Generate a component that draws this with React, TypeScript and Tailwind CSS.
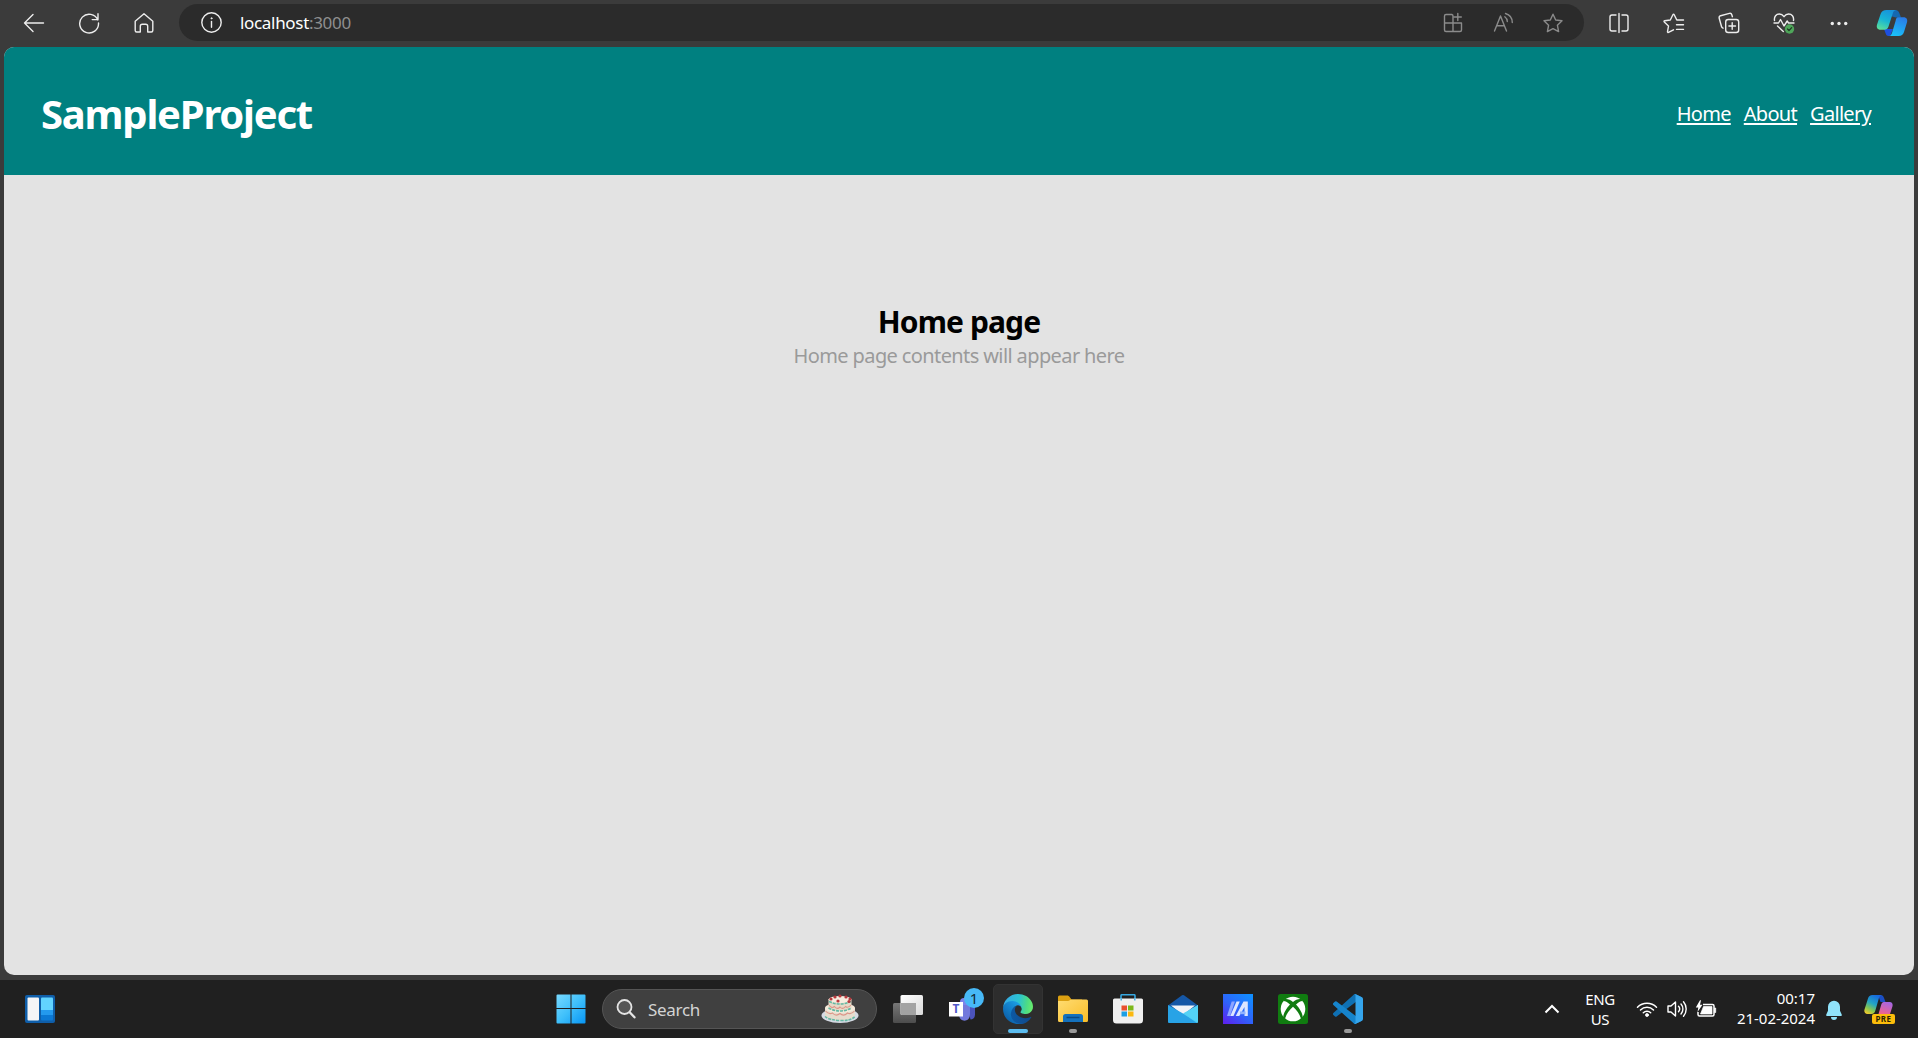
import type { ReactNode } from "react";

type IconProps = { w: number; h?: number; children: ReactNode; className?: string };

function Icon({ w, h = w, children, className = "" }: IconProps) {
  return (
    <svg
      width={w}
      height={h}
      viewBox={`0 0 ${w} ${h}`}
      fill="none"
      stroke="currentColor"
      strokeWidth="1.4"
      strokeLinecap="round"
      strokeLinejoin="round"
      className={`block shrink-0 ${className}`}
    >
      {children}
    </svg>
  );
}

const starPath = "M11 2.2 L13.7 8 L20 8.8 L15.4 13.2 L16.6 19.6 L11 16.6 L5.4 19.6 L6.6 13.2 L2 8.8 L8.3 8 Z";

function CopilotMark() {
  return (
    <svg width="32" height="28" viewBox="0 0 32 28" className="block shrink-0">
      <defs>
        <linearGradient id="cpA" x1="0.6" y1="0" x2="0.2" y2="1">
          <stop offset="0" stopColor="#1794dc" />
          <stop offset="0.5" stopColor="#18b5d4" />
          <stop offset="1" stopColor="#5be09a" />
        </linearGradient>
        <linearGradient id="cpB" x1="0.7" y1="0" x2="0.3" y2="1">
          <stop offset="0" stopColor="#2a7ce8" />
          <stop offset="1" stopColor="#19c3fa" />
        </linearGradient>
      </defs>
      <path d="M17 1h2.500c2 0 3.300 1.300 4 3.500l1.500 4h-5L14 7z" fill="#1568b0" />
      <path d="M8 20h9l-2 5c-.5 1.400-1.300 2-2.500 2-1.600 0-2.500-1-3-3z" fill="#1d4fe0" />
      <path d="M10.500 1H20c-2 .3-2.800 1.800-3.500 4.200l-4 12.300c-.8 2.300-2 3.300-4.200 3.300H4.500c-3 0-4.300-2.200-3.500-5L4.600 5C5.500 2.400 7.500 1 10.500 1z" fill="url(#cpA)" />
      <path d="M22 8.300h5.500c3 0 4.300 2.200 3.500 5l-3 9.700c-.8 2.700-2.600 4.100-5.400 4.100h-9.900c2-.2 2.800-1.600 3.500-3.800l3.300-11c.6-2.600 1-4 2.500-4z" fill="url(#cpB)" />
    </svg>
  );
}

function BrowserBar() {
  return (
    <div className="flex h-[47px] items-start bg-[#3b3b3b] text-[#ededed]">
      <div className="flex h-[45px] w-[179px] items-center pl-[6px]">
        <div className="flex w-[55px] justify-center">
          <Icon w={22}>
            <path d="M20.500 11H1.500M10 2.500 1.500 11l8.500 8.500" />
          </Icon>
        </div>
        <div className="flex w-[55px] justify-center">
          <Icon w={22}>
            <path d="M19.800 8A9.400 9.400 0 1 0 20.500 11M20 1.800V7.600H14.200" />
          </Icon>
        </div>
        <div className="flex w-[55px] justify-center">
          <Icon w={22}>
            <path d="M2.200 9.200 11 1.700l8.800 7.500v9.300a1.500 1.500 0 0 1-1.500 1.500h-3.600v-5.800a2 2 0 0 0-2-2h-3.400a2 2 0 0 0-2 2v5.800H3.700a1.500 1.500 0 0 1-1.500-1.500z" />
          </Icon>
        </div>
      </div>

      <div className="mt-1 flex h-[37px] w-[1405px] items-center rounded-full bg-[#2b2b2b] pl-[21px] pr-5">
        <Icon w={23}>
          <circle cx="11.500" cy="11.500" r="9.700" />
          <path d="M11.500 10.500v5.700" />
          <circle cx="11.500" cy="7.300" r=".6" fill="currentColor" strokeWidth="0.8" />
        </Icon>
        <div className="ml-[17px] flex-1 whitespace-nowrap text-[17px] leading-[22px] tracking-[-0.32px] text-white">
          <span>localhost</span>
          <span className="text-[#8f8f8f]">:3000</span>
        </div>
        <div className="flex items-center text-[#8b8b8b]">
          <Icon w={22}>
            <path d="M10 2.500H4A1.500 1.500 0 0 0 2.500 4v14A1.500 1.500 0 0 0 4 19.500h14a1.500 1.500 0 0 0 1.500-1.500v-7H2.500M11 19.500V4a1.500 1.500 0 0 0-1.500-1.500M15.800 1.500v7M12.300 5h7" />
          </Icon>
          <Icon w={22} className="ml-[29px]">
            <path d="M1.500 19 7.500 4l6 15M3.700 13.800h7.600M11.800 4.800a6 6 0 0 1 2.500 4.700M12.500 1.500a9.500 9.500 0 0 1 6.800 9" />
          </Icon>
          <Icon w={22} className="ml-[27px]">
            <path d={starPath} />
          </Icon>
        </div>
      </div>

      <div className="flex h-[45px] flex-1 items-center pl-[7px]">
        <div className="flex w-[55px] justify-center">
          <Icon w={22}>
            <path d="M8 3H4a2 2 0 0 0-2 2v12a2 2 0 0 0 2 2h4M11 1.500v19M14 3h4a2 2 0 0 1 2 2v12a2 2 0 0 1-2 2h-4" />
          </Icon>
        </div>
        <div className="flex w-[55px] justify-center">
          <Icon w={24} h={22}>
            <path d="M16 8h-1.200l-2.600-5.300c-.3-.6-1-.6-1.300 0L8.300 8l-5.600.8c-.7.100-.9.800-.4 1.300l4.200 4-1 5.500c-.1.700.5 1 1 .8l5-2.600M15 8h6.500M14.500 12.700h7M14.500 17.400h7" />
          </Icon>
        </div>
        <div className="flex w-[55px] justify-center">
          <Icon w={24} h={22}>
            <rect x="8.700" y="7.500" width="13" height="13" rx="2.500" />
            <path d="M15.200 10.700v6.600M11.900 14h6.600M6 16.200c-.8-.3-1.300-1-1.500-1.700L2.200 6.300c-.3-1.300.2-2.200 1.400-2.600l8.800-2.300c1.200-.3 2 .1 2.400 1.300l.6 2" />
          </Icon>
        </div>
        <div className="flex w-[55px] justify-center">
          <Icon w={24} h={22}>
            <path d="M2.500 8.500c-.6-4 1.800-6.500 4.800-6.500 2 0 3.500 1 4.700 2.700C13.200 3 14.700 2 16.700 2c3 0 5.400 2.500 4.800 6.500M2 11h4.500l2-3.500 3.500 6.500 3.200-5 1.300 2H22M5.500 14l5.800 5.500" />
            <circle cx="17.500" cy="17" r="4.700" fill="#4fa65a" stroke="none" />
            <path d="m15.500 17 1.500 1.500 2.700-2.900" stroke="#1f3a22" strokeWidth="1.200" />
          </Icon>
        </div>
        <div className="flex w-[55px] justify-center">
          <Icon w={22}>
            <g fill="currentColor" stroke="none">
              <circle cx="4.300" cy="11.500" r="1.700" />
              <circle cx="11" cy="11.500" r="1.700" />
              <circle cx="17.700" cy="11.500" r="1.700" />
            </g>
          </Icon>
        </div>
        <div className="ml-[10px]">
          <CopilotMark />
        </div>
      </div>
    </div>
  );
}

function TaskCell({ children, running = false }: { children: ReactNode; running?: boolean }) {
  return (
    <div className="relative flex h-[58px] w-[55px] items-center justify-center">
      {children}
      {running && <span className="absolute bottom-[5px] left-[24px] h-1 w-2 rounded-full bg-[#9a9a9a]" />}
    </div>
  );
}

function Cake() {
  const cherries: [number, number][] = [[10, 5], [14, 3], [19, 2], [25, 3], [29, 5], [17, 7], [28, 7.500]];
  return (
    <svg width="38" height="30" viewBox="0 0 38 30" className="block shrink-0">
      <ellipse cx="19" cy="21.500" rx="18.500" ry="7.500" fill="#d5dae3" />
      <path d="M4 14v8c2 6 28 6 30 0v-8z" fill="#e6dccd" />
      <ellipse cx="19" cy="14" rx="15" ry="5" fill="#f3eadb" />
      <path d="M7.500 5v9c2 4 21 4 23 0V5z" fill="#e6dac8" />
      <ellipse cx="19" cy="5.500" rx="11.500" ry="3.500" fill="#f7ecdf" />
      <g fill="none" strokeWidth="1.100">
        <path d="M8 11q2.700 4 5.500 1.500 2.700 3.500 5.500.5 2.700 3 5.500-.5 2.700 2 5.500-1.500" stroke="#dc9688" />
        <path d="M4.500 17q3.500 4 7 2 3.500 4 7.500.5 3.500 3.500 7.500-.5 3.500 2 7-2" stroke="#dc9688" />
        <path d="M7.500 14q11.500 6 23 0M4 22.500q4 3.500 15 4t15-4M8 7.500q11 5 22 0" stroke="#62b9a4" strokeWidth="1.600" strokeDasharray="3 1" />
      </g>
      {cherries.map(([x, y]) => (
        <circle key={`${x}-${y}`} cx={x} cy={y} r="1.600" fill="#b8383c" />
      ))}
    </svg>
  );
}

function StartLogo() {
  return (
    <svg width="30" height="30" viewBox="0 0 30 30" className="mr-[1px]">
      <defs>
        <linearGradient id="win" x1="0" y1="0" x2="1" y2="1">
          <stop offset="0" stopColor="#78d9ff" />
          <stop offset="0.5" stopColor="#3fc0fb" />
          <stop offset="1" stopColor="#0795f4" />
        </linearGradient>
      </defs>
      <path d="M1.500.5h13v13.500H.5V1.500a1 1 0 0 1 1-1zM15.500.5h13a1 1 0 0 1 1 1V14h-14zM.5 15h14v14.500h-13a1 1 0 0 1-1-1zM15.500 15h14v13.500a1 1 0 0 1-1 1h-13z" fill="url(#win)" />
    </svg>
  );
}

function EdgeLogo() {
  return (
    <svg width="30" height="30" viewBox="0 0 256 256">
      <defs>
        <linearGradient id="e1" x1="63" y1="178" x2="241" y2="178" gradientUnits="userSpaceOnUse">
          <stop offset="0" stopColor="#0c59a4" />
          <stop offset="1" stopColor="#114a8b" />
        </linearGradient>
        <linearGradient id="e2" x1="153" y1="100" x2="46" y2="217" gradientUnits="userSpaceOnUse">
          <stop offset="0" stopColor="#1b9de2" />
          <stop offset="0.4" stopColor="#1485d0" />
          <stop offset="1" stopColor="#0d65ae" />
        </linearGradient>
        <linearGradient id="e3" x1="10" y1="60" x2="250" y2="100" gradientUnits="userSpaceOnUse">
          <stop offset="0" stopColor="#35a9e6" />
          <stop offset="0.5" stopColor="#2bc3d2" />
          <stop offset="0.800" stopColor="#4cdb86" />
          <stop offset="1" stopColor="#66eb6e" />
        </linearGradient>
      </defs>
      <path d="M235.700 195.500a93.700 93.700 0 0 1-10.600 4.700 101.900 101.900 0 0 1-35.900 6.400c-47.300 0-88.500-32.500-88.500-74.300a31.500 31.500 0 0 1 16.400-27.300c-42.800 1.800-53.800 46.400-53.800 72.500 0 73.900 68.100 81.400 82.800 81.400 7.900 0 19.800-2.300 27-4.600l1.300-.4a128.300 128.300 0 0 0 66.600-52.800 4 4 0 0 0-5.300-5.600z" fill="url(#e1)" />
      <path d="M105.700 241.400A79.200 79.200 0 0 1 83 220.100a80.700 80.700 0 0 1 29.500-120c3.200-1.500 8.500-4.100 15.600-4a32.400 32.400 0 0 1 25.700 13 31.900 31.900 0 0 1 6.300 18.700c0-.2 24.500-79.600-80-79.600-43.900 0-80 41.700-80 78.200a130.200 130.200 0 0 0 12.100 56 128 128 0 0 0 156.400 67 75.500 75.500 0 0 1-62.800-8z" fill="url(#e2)" />
      <path d="M152.300 148.900c-.9 1-3.400 2.500-3.400 5.600 0 2.600 1.700 5.200 4.800 7.300 14.300 10 41.400 8.600 41.500 8.600a59.600 59.600 0 0 0 30.300-8.300 61.400 61.400 0 0 0 30.400-52.900c.3-22.400-8-37.300-11.300-43.900C223.500 23.900 177.700 0 128 0A128 128 0 0 0 0 126.200c.5-36.500 36.800-66 80-66 3.500 0 23.500.3 42 10a72.600 72.600 0 0 1 30.900 29.300c6.100 10.600 7.200 24.100 7.200 29.500s-2.700 13.300-7.800 19.900z" fill="url(#e3)" />
    </svg>
  );
}

function Taskbar() {
  return (
    <div className="flex h-[58px] items-center bg-[#202020] text-white">
      <div className="w-[544px] pl-[25px]">
        <svg width="30" height="28" viewBox="0 0 30 28">
          <rect width="30" height="28" rx="2" fill="#0f5ea9" />
          <rect x="2.500" y="2.500" width="11.500" height="23" rx="1" fill="#f4f5f7" />
          <path d="M16 3.500a1 1 0 0 1 1-1h10a1 1 0 0 1 1 1V15H16z" fill="#62d4ff" />
          <path d="M16 15h12v5H16z" fill="#2399ee" />
          <path d="M16 20h12v4.500a1 1 0 0 1-1 1H17a1 1 0 0 1-1-1z" fill="#0b78d4" />
        </svg>
      </div>

      <TaskCell>
        <StartLogo />
      </TaskCell>
      <div className="ml-[3px] mr-[3px] flex h-10 w-[275px] items-center rounded-full border border-[#555555] bg-[#404040] pl-[12px] pr-[17px]">
        <svg width="22" height="22" viewBox="0 0 22 22" fill="none" stroke="#e4e4e4" strokeLinecap="round">
          <circle cx="9.500" cy="9" r="7" fill="#555" strokeWidth="1.800" />
          <path d="m14.700 14.300 4.800 5" strokeWidth="2.300" />
        </svg>
        <span className="ml-[11px] flex-1 pt-px text-[17px] leading-[22px] tracking-[-0.3px] text-[#d4d4d4]">Search</span>
        <Cake />
      </div>

      <TaskCell>
        <svg width="32" height="30" viewBox="0 0 32 30">
          <defs>
            <linearGradient id="tv1" x1="0" y1="0" x2="1" y2="1">
              <stop offset="0" stopColor="#ffffff" />
              <stop offset="1" stopColor="#d9d9d9" />
            </linearGradient>
            <linearGradient id="tv2" x1="0" y1="0" x2="0" y2="1">
              <stop offset="0" stopColor="#777" />
              <stop offset="1" stopColor="#4d4d4d" />
            </linearGradient>
          </defs>
          <rect x="1" y="9" width="23" height="20" rx="1.500" fill="url(#tv2)" />
          <rect x="8.500" y="1" width="22.500" height="20" rx="1.500" fill="url(#tv1)" />
          <path d="M8.500 9H24v12H10a1.500 1.500 0 0 1-1.500-1.500z" fill="#a3a3a3" />
        </svg>
      </TaskCell>

      <TaskCell>
        <svg width="32" height="32" viewBox="0 0 32 32">
          <circle cx="17" cy="9" r="4" fill="#7b83eb" />
          <path d="M20 13h8v8.500c0 3-1.700 5-4.500 5z" fill="#4b53bc" />
          <path d="M12 12h11v9c0 4-2 6.700-5.500 6.700S12 25 12 21z" fill="#7279dc" />
          <rect x="2" y="9" width="14" height="14.500" fill="#fff" />
        </svg>
        <span className="absolute left-[14px] top-[22px] w-[14px] text-center text-[12px] font-bold leading-[14px] text-[#5059c9]">T</span>
        <span className="absolute left-[29px] top-2 flex h-5 w-5 items-center justify-center rounded-full bg-[#47b9f7] text-[15px] leading-none text-[#102a38]">
          1
        </span>
      </TaskCell>

      <TaskCell>
        <div className="flex h-[50px] w-[50px] items-center justify-center rounded-[5px] border border-[#333333] bg-[#2d2d2d]">
          <EdgeLogo />
        </div>
        <span className="absolute bottom-[5px] left-[18px] h-1 w-5 rounded-full bg-[#5cbdf0]" />
      </TaskCell>

      <TaskCell running>
        <svg width="32" height="28" viewBox="0 0 32 28">
          <defs>
            <linearGradient id="fd" x1="0" y1="0" x2="1" y2="1">
              <stop offset="0" stopColor="#ffdc72" />
              <stop offset="1" stopColor="#f9bd28" />
            </linearGradient>
          </defs>
          <path d="M1 2a1.500 1.500 0 0 1 1.500-1.500H10c1.300 0 2 .6 3 2l1.500 2H25V10H1z" fill="#dca011" />
          <path d="M1 6h10c1.500 0 2-1.500 3.500-1.500h15A1.500 1.500 0 0 1 31 6v19.500a1.500 1.500 0 0 1-1.500 1.500h-27A1.500 1.500 0 0 1 1 25.500z" fill="url(#fd)" />
          <path d="M6 27v-5.500A2.500 2.500 0 0 1 8.500 19h15a2.500 2.500 0 0 1 2.500 2.500V27z" fill="#1471bd" />
          <path d="M9.500 22.500h13" stroke="#0a4a84" strokeWidth="1.500" />
        </svg>
      </TaskCell>

      <TaskCell>
        <svg width="30" height="30" viewBox="0 0 30 30">
          <path d="M8 5V1.700C8 1 8.500.7 9.200.7h11.600c.7 0 1.200.3 1.200 1V5" fill="none" stroke="#37a8e0" strokeWidth="1.600" />
          <path d="M0 6a1.500 1.500 0 0 1 1.500-1.500h27A1.500 1.500 0 0 1 30 6v20a3.500 3.500 0 0 1-3.500 3.500h-23A3.500 3.500 0 0 1 0 26z" fill="#f0f0f0" />
          <path d="M8.500 11.500H14v5H8.500z" fill="#e8502f" />
          <path d="M15 11.500h5.500v5H15z" fill="#7cb81a" />
          <path d="M8.500 17.500H14v5H8.500z" fill="#1c9fe4" />
          <path d="M15 17.500h5.500v5H15z" fill="#fbb810" />
          <path d="M8.200 4.500v2M21.800 4.500v2" stroke="#37a8e0" strokeWidth="1.400" />
        </svg>
      </TaskCell>

      <TaskCell>
        <svg width="32" height="30" viewBox="0 0 32 30">
          <path d="M1 11.500 15 1.300a1.700 1.700 0 0 1 2 0L31 11.500v6H1z" fill="#1557a6" />
          <path d="M4 11.500h24L16 21z" fill="#f1f3f7" />
          <path d="M31 11v17a1 1 0 0 1-1 1H4z" fill="#4acbf4" />
          <path d="M1 11v17a1 1 0 0 0 1 1h28L16 19.500z" fill="#28a3e6" />
          <path d="M16 19.500 31 11v17.500z" fill="#53d2f5" />
        </svg>
      </TaskCell>

      <TaskCell>
        <svg width="30" height="30" viewBox="0 0 30 30">
          <defs>
            <linearGradient id="as" x1="0.900" y1="0" x2="0.100" y2="1">
              <stop offset="0" stopColor="#108fff" />
              <stop offset="0.550" stopColor="#2f62fb" />
              <stop offset="1" stopColor="#5b23ee" />
            </linearGradient>
          </defs>
          <rect width="30" height="30" fill="url(#as)" />
          <path d="M7.500 7.500h3.200L5.800 22H2.800z" fill="#8ea6ff" transform="translate(1.200 0)" />
          <path d="M13.500 7.500h3.300L10.500 22H7.200z" fill="#dce6ff" />
          <path d="M20.500 7.500h4.300V22h-3.300v-9L16.300 22h-3.600z" fill="#dce6ff" />
          <path d="M17 17.500h5.500v2.700H17z" fill="#8fb2ff" />
        </svg>
      </TaskCell>

      <TaskCell>
        <svg width="30" height="30" viewBox="0 0 30 30">
          <rect width="30" height="30" rx="2.500" fill="#107c10" />
          <circle cx="15" cy="15" r="12.300" fill="#fff" />
          <path d="M15 8C12.500 6 9 4.500 6.500 5.300L5 7c2.300-.2 5 1.500 7 3.500C8.200 14.500 5 20 5.300 23.700l1.700 1.800C7.500 21.500 11 16 15 12.800c4 3.200 7.500 8.700 8 12.700l1.700-1.800C25 20 21.800 14.500 18 10.500c2-2 4.700-3.700 7-3.500l-1.500-1.700C21 4.500 17.500 6 15 8z" fill="#107c10" />
        </svg>
      </TaskCell>

      <TaskCell running>
        <svg width="30" height="30" viewBox="0 0 100 100">
          <path d="M96.500 10.800 75.900.9a6.200 6.200 0 0 0-7.100 1.200L1.300 63.600a4.200 4.200 0 0 0 0 6.200l5.500 5a4.200 4.200 0 0 0 5.300.2L93.400 13.400c2.700-2.100 6.600-.1 6.600 3.300v-.3a6.300 6.300 0 0 0-3.500-5.600z" fill="#0f70b3" />
          <path d="m96.500 89.200-20.600 9.900a6.200 6.200 0 0 1-7.100-1.200L1.300 36.400a4.200 4.200 0 0 1 0-6.200l5.500-5a4.200 4.200 0 0 1 5.300-.2l81.300 61.600c2.700 2.100 6.600.1 6.600-3.300v.3a6.300 6.300 0 0 1-3.500 5.600z" fill="#1684cc" />
          <path d="M75.900 99.100a6.200 6.200 0 0 1-7.100-1.200c2.300 2.300 6.200.7 6.200-2.600V4.700c0-3.300-3.900-4.900-6.200-2.600A6.200 6.200 0 0 1 75.900.9l20.600 9.900a6.300 6.300 0 0 1 3.500 5.600v67.200a6.300 6.300 0 0 1-3.500 5.600z" fill="#35a5ec" />
        </svg>
      </TaskCell>

      <div className="ml-auto flex items-center pr-[23px]">
        <svg width="16" height="10" viewBox="0 0 16 10" fill="none" stroke="#fff" strokeWidth="2">
          <path d="M1.500 8.500 8 2l6.500 6.500" />
        </svg>
        <div className="ml-[20px] w-[40px] text-center text-[15px] leading-[20px] tracking-[-0.400px]">
          <div>ENG</div>
          <div>US</div>
        </div>
        <svg width="22" height="18" viewBox="0 0 22 18" fill="none" stroke="#fff" strokeWidth="1.500" strokeLinecap="round" className="ml-[16px]">
          <path d="M1.500 7.200a13.500 13.500 0 0 1 19 0M4.500 10a9.300 9.300 0 0 1 13 0M7.300 12.700a5.300 5.300 0 0 1 7.400 0" />
          <circle cx="11" cy="15" r="1.500" fill="#fff" strokeWidth="0.800" />
        </svg>
        <svg width="22" height="18" viewBox="0 0 22 18" fill="none" stroke="#fff" strokeWidth="1.400" strokeLinecap="round" strokeLinejoin="round" className="ml-[8px]">
          <path d="M2 6h3l4.500-4v14L5 12H2zM12.500 6.300a4 4 0 0 1 0 5.400M15 4a7.500 7.500 0 0 1 0 10M17.500 1.800a11 11 0 0 1 0 14.400" />
        </svg>
        <svg width="22" height="18" viewBox="0 0 22 18" className="ml-[7px]">
          <path d="M8 4.500h9.500A1.500 1.500 0 0 1 19 6v8.500a1.500 1.500 0 0 1-1.500 1.500H4.500A1.500 1.500 0 0 1 3 14.500V12" fill="none" stroke="#fff" strokeWidth="1.500" />
          <path d="M8.500 6.500H17v7.500H5.500zM19.500 8h1.200v4.500h-1.200z" fill="#fff" stroke="#fff" strokeWidth="0.700" />
          <path d="M5 .3.800 7.500h2.500L2.500 12 7.500 4.700H5L6 .3z" fill="#fff" />
        </svg>
        <div className="mb-[2px] ml-[8px] w-[90px] whitespace-nowrap text-right text-[15px] leading-[20px] tracking-[-0.02px]">
          <div>00:17</div>
          <div>21-02-2024</div>
        </div>
        <svg width="18" height="20" viewBox="0 0 18 20" className="ml-[10px] mt-[2px]">
          <path d="M9 .8a6 6 0 0 1 6 6v4l1.800 4c.2.600-.1 1.200-.8 1.200H2c-.7 0-1-.6-.8-1.200L3 10.800v-4a6 6 0 0 1 6-6zM6 17h6a3 3 0 0 1-6 0z" fill="#90e3fb" />
        </svg>
        <div className="relative ml-[22px] h-[30px] w-[30px]">
          <svg width="30" height="30" viewBox="0 0 30 30" className="-ml-[1px]">
            <defs>
              <linearGradient id="cp1" x1="0.700" y1="0" x2="0.200" y2="1">
                <stop offset="0" stopColor="#1667e0" />
                <stop offset="0.450" stopColor="#22a5c4" />
                <stop offset="0.750" stopColor="#83c653" />
                <stop offset="1" stopColor="#f0cb2c" />
              </linearGradient>
              <linearGradient id="cp2" x1="0.700" y1="0" x2="0.300" y2="1">
                <stop offset="0" stopColor="#a466e4" />
                <stop offset="1" stopColor="#f0648c" />
              </linearGradient>
            </defs>
            <path d="M14 1h2.500c1.800 0 3 1 3.500 3l1.500 4h-5z" fill="#1b4ec4" />
            <path d="M8.500 1H18c-1.800.3-2.600 1.500-3.200 3.500L11.500 16c-.6 2.500-1.800 4-4.200 4H3.500c-2.500 0-3.700-2-3-4.500L4 4.500C4.600 2.200 6 1 8.500 1z" fill="url(#cp1)" />
            <path d="M20 8h5.500c2.500 0 3.700 2 3 4.300L26 20H14.500L17 11.500C17.600 9.200 18.200 8 20 8z" fill="url(#cp2)" />
          </svg>
          <span className="absolute bottom-0 left-[7px] flex h-[10px] w-[23px] items-center justify-center rounded-[2px] bg-[#fcbd0b] text-[8px] font-bold leading-none tracking-[0.500px] text-[#2b2200]">
            PRE
          </span>
        </div>
      </div>
    </div>
  );
}

export default function App() {
  return (
    <div className="flex h-[1038px] w-[1918px] flex-col overflow-hidden bg-[#3b3b3b] font-['Noto_Sans','Open_Sans',sans-serif]">
      <BrowserBar />
      <div className="mx-1 flex h-[928px] flex-col overflow-hidden rounded-[10px] bg-[#e3e3e3]">
        <header className="flex h-32 items-center justify-between bg-[#008080] pl-[37px] pr-[43px] text-white">
          <h1 className="whitespace-nowrap pt-1.5 text-[40px] font-bold leading-[54px] tracking-[-1.22px]">SampleProject</h1>
          <nav className="flex gap-[13px] pt-1.5 text-[20px] leading-[28px] tracking-[-0.7px]">
            <a className="underline decoration-2 underline-offset-2">Home</a>
            <a className="underline decoration-2 underline-offset-2">About</a>
            <a className="underline decoration-2 underline-offset-2">Gallery</a>
          </nav>
        </header>
        <main className="flex flex-col items-center pt-[127px]">
          <h2 className="whitespace-nowrap text-[30px] font-bold leading-[40px] tracking-[-0.9px]">Home page</h2>
          <p className="whitespace-nowrap text-[20px] leading-[28px] tracking-[-0.61px] text-[#9a9a9a]">Home page contents will appear here</p>
        </main>
      </div>
      <div className="h-[5px] shrink-0" />
      <Taskbar />
    </div>
  );
}
